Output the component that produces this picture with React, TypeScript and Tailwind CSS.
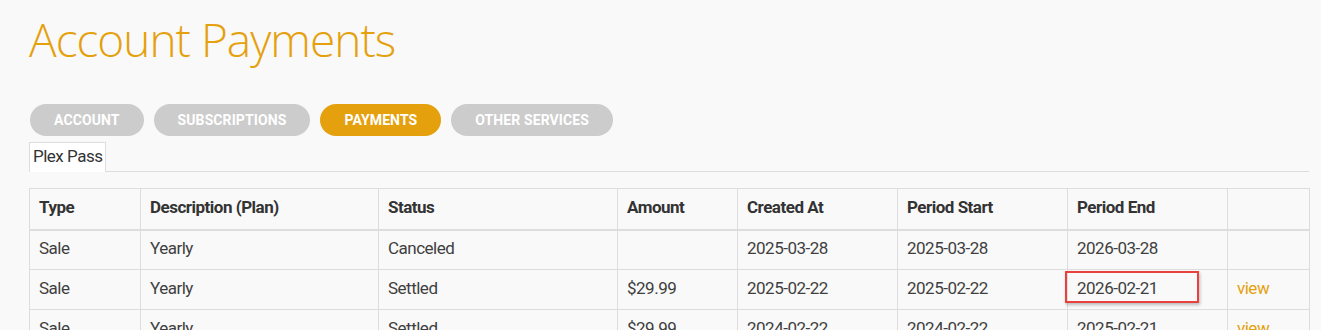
const tabs = [
  { label: "Account", active: false },
  { label: "Subscriptions", active: false },
  { label: "Payments", active: true },
  { label: "Other Services", active: false },
];

const cols = [
  { label: "Type", w: "w-[111px]" },
  { label: "Description (Plan)", w: "w-[238px]" },
  { label: "Status", w: "w-[239px]" },
  { label: "Amount", w: "w-[120px]" },
  { label: "Created At", w: "w-[160px]" },
  { label: "Period Start", w: "w-[170px]" },
  { label: "Period End", w: "w-[160px]" },
  { label: "", w: "w-[82px]" },
];

const rows = [
  { type: "Sale", desc: "Yearly", status: "Canceled", amount: "", created: "2025-03-28", start: "2025-03-28", end: "2026-03-28", view: false, mark: false },
  { type: "Sale", desc: "Yearly", status: "Settled", amount: "$29.99", created: "2025-02-22", start: "2025-02-22", end: "2026-02-21", view: true, mark: true },
  { type: "Sale", desc: "Yearly", status: "Settled", amount: "$29.99", created: "2024-02-22", start: "2024-02-22", end: "2025-02-21", view: true, mark: false },
];

export default function App() {
  return (
    <div className="h-[330px] overflow-hidden bg-[#f9f9f9] pl-[29px] pr-[12px] font-['Roboto',sans-serif] text-[#3f3f3f]">
      <h1 className="pt-[9px] font-['Open_Sans',sans-serif] text-[46px] font-light leading-[60px] tracking-[-1px] text-[#e5a00d]">
        Account Payments
      </h1>

      {/* tabs */}
      <div className="mt-[35px] flex gap-[10px] pl-[1px]">
        {tabs.map((t) => (
          <div
            key={t.label}
            className={`flex h-[32px] items-center rounded-full px-[24px] text-[14px] font-bold uppercase tracking-[0.1px] text-white ${
              t.active ? "bg-[#e5a00d]" : "bg-[#cccccc]"
            }`}
          >
            {t.label}
          </div>
        ))}
      </div>

      {/* sub tabs */}
      <div className="mt-[6px] flex border-b border-[#dddddd]">
        <div className="-mb-px border border-b-0 border-[#dddddd] bg-white px-[3px] pt-[3px] pb-[5px] text-[17px] leading-[21px] tracking-[-0.5px] text-[#333]">
          Plex Pass
        </div>
      </div>

      {/* table */}
      <table className="mt-[16px] w-[1280px] table-fixed border-collapse text-[17px] leading-[20px] tracking-[-0.5px]">
        <thead>
          <tr>
            {cols.map((c, i) => (
              <th
                key={i}
                className={`${c.w} h-[41px] border border-b-2 border-[#dddddd] pb-[4px] pl-[9px] pr-0 text-left align-middle font-bold text-[#333]`}
              >
                {c.label}
              </th>
            ))}
          </tr>
        </thead>
        <tbody>
          {rows.map((r, i) => (
            <tr key={i}>
              <td className="h-[40px] border border-[#dddddd] pb-[4px] pl-[9px]">{r.type}</td>
              <td className="border border-[#dddddd] pb-[4px] pl-[9px]">{r.desc}</td>
              <td className="border border-[#dddddd] pb-[4px] pl-[9px]">{r.status}</td>
              <td className="border border-[#dddddd] pb-[4px] pl-[9px]">{r.amount}</td>
              <td className="border border-[#dddddd] pb-[4px] pl-[9px]">{r.created}</td>
              <td className="border border-[#dddddd] pb-[4px] pl-[9px]">{r.start}</td>
              <td className="relative border border-[#dddddd] pb-[4px] pl-[9px]">
                {r.end}
                {r.mark && (
                  <div className="absolute left-[-3px] top-[1px] h-[32px] w-[134px] border-2 border-[#e8413e] shadow-[1px_2px_3px_rgba(0,0,0,0.25)]" />
                )}
              </td>
              <td className="border border-[#dddddd] pb-[4px] pl-[9px]">
                {r.view && <span className="text-[#e5a00d]">view</span>}
              </td>
            </tr>
          ))}
        </tbody>
      </table>
    </div>
  );
}
